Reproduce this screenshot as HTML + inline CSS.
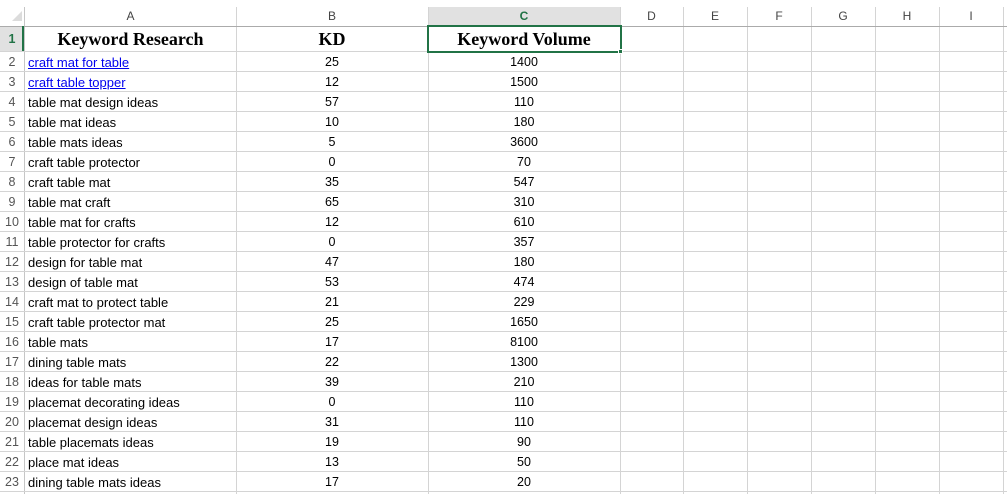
<!DOCTYPE html>
<html><head><meta charset="utf-8"><style>
*{margin:0;padding:0;box-sizing:border-box}
body{width:1007px;height:494px;background:#fff;position:relative;overflow:hidden;font-family:"Liberation Sans",sans-serif;font-size:13px;color:#000}
.vl{position:absolute;width:1px;background:#d4d4d4}
.hl{position:absolute;height:1px;background:#d4d4d4;left:0;width:1007px}
.ch{position:absolute;top:7px;height:19px;line-height:19px;text-align:center;color:#444;font-size:12px}
.r{position:absolute;left:0;width:1007px;height:20px;line-height:21px}
.r span{position:absolute;top:0}
.n{left:0;width:24px;text-align:center;color:#555;font-size:12.5px}
.a{left:28px;white-space:nowrap}
.b{left:236px;width:192px;text-align:center;font-size:12.5px}
.c{left:428px;width:192px;text-align:center;font-size:12.5px}
.lk{color:#0000ee;text-decoration:underline}
.h1{font-family:"Liberation Serif",serif;font-weight:bold;font-size:18px;position:absolute;top:26px;height:25px;line-height:27px;text-align:center}
</style></head><body>
<div style="position:absolute;left:428px;top:7px;width:192px;height:19px;background:#e1e1e1"></div>
<div style="position:absolute;left:0;top:26px;width:24px;height:25px;background:#e1e1e1"></div>
<div style="position:absolute;left:12px;top:11px;width:0;height:0;border-left:10px solid transparent;border-bottom:10px solid #dcdcdc"></div>
<div class="ch" style="left:25px;width:211px">A</div>
<div class="ch" style="left:236px;width:192px">B</div>
<div class="ch" style="left:428px;width:192px;color:#217346;font-weight:bold">C</div>
<div class="ch" style="left:620px;width:63px">D</div>
<div class="ch" style="left:683px;width:64px">E</div>
<div class="ch" style="left:747px;width:64px">F</div>
<div class="ch" style="left:811px;width:64px">G</div>
<div class="ch" style="left:875px;width:64px">H</div>
<div class="ch" style="left:939px;width:64px">I</div>
<div class="vl" style="left:24px;top:7px;height:487px;background:#c6c6c6"></div>
<div class="vl" style="left:236px;top:7px;height:487px"></div>
<div class="vl" style="left:428px;top:7px;height:487px"></div>
<div class="vl" style="left:620px;top:7px;height:487px"></div>
<div class="vl" style="left:683px;top:7px;height:487px"></div>
<div class="vl" style="left:747px;top:7px;height:487px"></div>
<div class="vl" style="left:811px;top:7px;height:487px"></div>
<div class="vl" style="left:875px;top:7px;height:487px"></div>
<div class="vl" style="left:939px;top:7px;height:487px"></div>
<div class="vl" style="left:1003px;top:7px;height:487px"></div>
<div class="hl" style="top:26px;background:#ababab"></div>
<div class="hl" style="top:51px"></div><div class="hl" style="top:71px"></div><div class="hl" style="top:91px"></div><div class="hl" style="top:111px"></div><div class="hl" style="top:131px"></div><div class="hl" style="top:151px"></div><div class="hl" style="top:171px"></div><div class="hl" style="top:191px"></div><div class="hl" style="top:211px"></div><div class="hl" style="top:231px"></div><div class="hl" style="top:251px"></div><div class="hl" style="top:271px"></div><div class="hl" style="top:291px"></div><div class="hl" style="top:311px"></div><div class="hl" style="top:331px"></div><div class="hl" style="top:351px"></div><div class="hl" style="top:371px"></div><div class="hl" style="top:391px"></div><div class="hl" style="top:411px"></div><div class="hl" style="top:431px"></div><div class="hl" style="top:451px"></div><div class="hl" style="top:471px"></div><div class="hl" style="top:491px"></div>
<div style="position:absolute;left:22px;top:26px;width:2px;height:25px;background:#217346"></div>
<div style="position:absolute;left:427px;top:25px;width:195px;height:28px;border:2px solid #217346"></div>
<div style="position:absolute;left:618px;top:49px;width:5px;height:5px;background:#217346;border:1px solid #fff"></div>
<div style="position:absolute;left:0;top:26px;width:24px;height:25px;line-height:27px;text-align:center;color:#217346;font-weight:bold;font-size:12.5px">1</div>
<div class="h1" style="left:25px;width:211px">Keyword Research</div>
<div class="h1" style="left:236px;width:192px">KD</div>
<div class="h1" style="left:428px;width:192px">Keyword Volume</div>
<div class="r" style="top:52px"><span class="n">2</span><span class="a lk">craft mat for table</span><span class="b">25</span><span class="c">1400</span></div>
<div class="r" style="top:72px"><span class="n">3</span><span class="a lk">craft table topper</span><span class="b">12</span><span class="c">1500</span></div>
<div class="r" style="top:92px"><span class="n">4</span><span class="a">table mat design ideas</span><span class="b">57</span><span class="c">110</span></div>
<div class="r" style="top:112px"><span class="n">5</span><span class="a">table mat ideas</span><span class="b">10</span><span class="c">180</span></div>
<div class="r" style="top:132px"><span class="n">6</span><span class="a">table mats ideas</span><span class="b">5</span><span class="c">3600</span></div>
<div class="r" style="top:152px"><span class="n">7</span><span class="a">craft table protector</span><span class="b">0</span><span class="c">70</span></div>
<div class="r" style="top:172px"><span class="n">8</span><span class="a">craft table mat</span><span class="b">35</span><span class="c">547</span></div>
<div class="r" style="top:192px"><span class="n">9</span><span class="a">table mat craft</span><span class="b">65</span><span class="c">310</span></div>
<div class="r" style="top:212px"><span class="n">10</span><span class="a">table mat for crafts</span><span class="b">12</span><span class="c">610</span></div>
<div class="r" style="top:232px"><span class="n">11</span><span class="a">table protector for crafts</span><span class="b">0</span><span class="c">357</span></div>
<div class="r" style="top:252px"><span class="n">12</span><span class="a">design for table mat</span><span class="b">47</span><span class="c">180</span></div>
<div class="r" style="top:272px"><span class="n">13</span><span class="a">design of table mat</span><span class="b">53</span><span class="c">474</span></div>
<div class="r" style="top:292px"><span class="n">14</span><span class="a">craft mat to protect table</span><span class="b">21</span><span class="c">229</span></div>
<div class="r" style="top:312px"><span class="n">15</span><span class="a">craft table protector mat</span><span class="b">25</span><span class="c">1650</span></div>
<div class="r" style="top:332px"><span class="n">16</span><span class="a">table mats</span><span class="b">17</span><span class="c">8100</span></div>
<div class="r" style="top:352px"><span class="n">17</span><span class="a">dining table mats</span><span class="b">22</span><span class="c">1300</span></div>
<div class="r" style="top:372px"><span class="n">18</span><span class="a">ideas for table mats</span><span class="b">39</span><span class="c">210</span></div>
<div class="r" style="top:392px"><span class="n">19</span><span class="a">placemat decorating ideas</span><span class="b">0</span><span class="c">110</span></div>
<div class="r" style="top:412px"><span class="n">20</span><span class="a">placemat design ideas</span><span class="b">31</span><span class="c">110</span></div>
<div class="r" style="top:432px"><span class="n">21</span><span class="a">table placemats ideas</span><span class="b">19</span><span class="c">90</span></div>
<div class="r" style="top:452px"><span class="n">22</span><span class="a">place mat ideas</span><span class="b">13</span><span class="c">50</span></div>
<div class="r" style="top:472px"><span class="n">23</span><span class="a">dining table mats ideas</span><span class="b">17</span><span class="c">20</span></div>
</body></html>
